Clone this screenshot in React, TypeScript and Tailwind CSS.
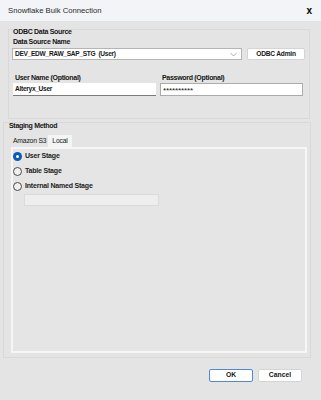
import React from 'react';

const font = { fontFamily: '"Liberation Sans", Arial, sans-serif' };

function Radio({ checked, label }: { checked?: boolean; label: string }) {
  return (
    <div className="flex items-center gap-[3px] h-[14px]">
      {checked ? (
        <span className="w-[9px] h-[9px] rounded-full bg-[#0b5cb8] flex items-center justify-center">
          <span className="w-[3px] h-[3px] rounded-full bg-white" />
        </span>
      ) : (
        <span className="w-[9px] h-[9px] rounded-full border border-[#4a4a4a] bg-[#f0f0f0]" />
      )}
      <span className="text-[7px] font-bold tracking-[-0.2px] text-[#222]">{label}</span>
    </div>
  );
}

export default function App() {
  return (
    <div className="w-[321px] h-[400px] bg-[#e4e4e4] flex flex-col text-[#161616]" style={font}>
      <div className="h-[22px] bg-[#f3f4f8] flex items-center justify-between pl-[8px] pr-[9px] border-b border-[#e2e2e2]">
        <span className="text-[7.7px] text-[#2a2a2a]">Snowflake Bulk Connection</span>
        <span className="text-[10px] font-bold leading-none text-black">x</span>
      </div>

      <div className="ml-[8px] w-[302px] mt-[7px] h-[90px] border border-[#d9d9d9] pl-[3px] pr-[4px]">
        <div className="mt-[-3px] h-[10px] leading-[10px] pl-[1px] text-[7px] font-bold tracking-[-0.3px]">ODBC Data Source</div>
        <div className="h-[10px] leading-[10px] pl-[1px] text-[7px] font-bold tracking-[-0.3px]">Data Source Name</div>
        <div className="flex gap-[5px] mt-[1px]">
          <div className="w-[230px] h-[12px] bg-white border border-[#b5b5b5] flex items-center justify-between pl-[2px] pr-[4px]">
            <span className="text-[6.6px] font-bold tracking-[-0.3px] text-[#1a1a1a]">DEV_EDW_RAW_SAP_STG&nbsp;&nbsp;(User)</span>
            <svg width="7" height="5" viewBox="0 0 7 5"><path d="M0.5 1 L3.5 4 L6.5 1" fill="none" stroke="#999" strokeWidth="0.8" /></svg>
          </div>
          <div className="w-[58px] h-[12px] bg-white border border-[#d4d4d4] rounded-[2px] flex items-center justify-center text-[6.6px] font-bold tracking-[-0.2px]">
            ODBC Admin
          </div>
        </div>
        <div className="flex gap-[4px] mt-[13px]">
          <div className="w-[144px] pl-[1px]">
            <div className="h-[10px] leading-[10px] pl-[2px] text-[7px] font-bold tracking-[-0.3px]">User Name (Optional)</div>
            <div className="h-[13px] bg-white border-b border-[#7a7a7a] flex items-center pl-[2px] text-[6.6px] font-bold tracking-[-0.3px]">Alteryx_User</div>
          </div>
          <div className="w-[143px]">
            <div className="h-[10px] leading-[10px] pl-[2px] text-[7px] font-bold tracking-[-0.3px]">Password (Optional)</div>
            <div className="h-[13px] bg-white border border-[#ababab] flex items-center pl-[2px] pt-[3px] text-[8px] leading-none tracking-[-0.1px]">**********</div>
          </div>
        </div>
      </div>

      <div className="ml-[3px] w-[308px] mt-[3px] h-[236px] border border-[#d9d9d9] flex flex-col">
        <div className="mt-[-2px] h-[10px] leading-[10px] pl-[5px] text-[7px] font-bold tracking-[-0.3px]">Staging Method</div>
        <div className="flex pl-[6px] mt-[4px] h-[12px] items-end">
          <div className="pl-[3px] pr-[2px] h-[12px] text-[6.8px] tracking-[-0.2px] flex items-center">Amazon S3</div>
          <div className="px-[4px] h-[12px] text-[6.8px] tracking-[-0.2px] flex items-center bg-[#f4f4f4]">Local</div>
        </div>
        <div className="ml-[7px] mr-[3px] flex-1 mb-[4px] border-2 border-[#f6f6f6] bg-[#e5e5e5] flex flex-col gap-[1px]">
          <Radio checked label="User Stage" />
          <Radio label="Table Stage" />
          <Radio label="Internal Named Stage" />
          <div className="ml-[11px] w-[135px] h-[12px] bg-[#eeeeee] border border-[#dadada]" />
        </div>
      </div>

      <div className="flex justify-end gap-[5px] pr-[19px] mt-[11px]">
        <div className="w-[44px] h-[13px] bg-white border border-[#4a8ad6] rounded-[2px] flex items-center justify-center text-[6.8px] font-bold">OK</div>
        <div className="w-[44px] h-[13px] bg-white border border-[#d4d4d4] rounded-[2px] flex items-center justify-center text-[6.8px] font-bold">Cancel</div>
      </div>
    </div>
  );
}
